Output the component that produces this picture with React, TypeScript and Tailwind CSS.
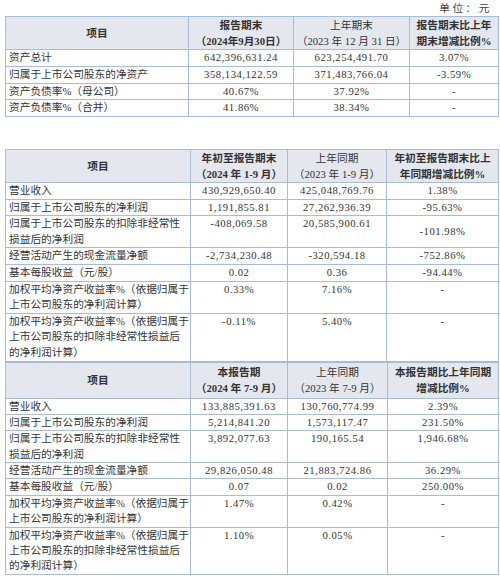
import React from "react";

type Row = { label: string[]; cells: string[]; midLast?: boolean };
type Sheet = {
  cols: string[];
  head: string[][];
  headBold: boolean[];
  headH: string;
  line: string;
  rows: Row[];
};

const SHEETS: Sheet[] = [
  {
    cols: ["w-[183px]", "w-[105px]", "w-[116px]", "w-[89px]"],
    head: [["项目"], ["报告期末", "（2024年9月30日）"], ["上年期末", "（2023 年 12 月 31 日）"], ["报告期末比上年", "期末增减比例%"]],
    headBold: [true, true, false, true],
    headH: "h-[33px]",
    line: "h-[15.75px] leading-[15.75px]",
    rows: [
      { label: ["资产总计"], cells: ["642,396,631.24", "623,254,491.70", "3.07%"] },
      { label: ["归属于上市公司股东的净资产"], cells: ["358,134,122.59", "371,483,766.04", "-3.59%"] },
      { label: ["资产负债率%（母公司）"], cells: ["40.67%", "37.92%", "-"] },
      { label: ["资产负债率%（合并）"], cells: ["41.86%", "38.34%", "-"] },
    ],
  },
  {
    cols: ["w-[185px]", "w-[97px]", "w-[99px]", "w-[112px]"],
    head: [["项目"], ["年初至报告期末", "（2024 年 1-9 月）"], ["上年同期", "（2023 年 1-9 月）"], ["年初至报告期末比上", "年同期增减比例%"]],
    headBold: [true, true, false, true],
    headH: "h-[33px]",
    line: "h-[15.6px] leading-[15.6px]",
    rows: [
      { label: ["营业收入"], cells: ["430,929,650.40", "425,048,769.76", "1.38%"] },
      { label: ["归属于上市公司股东的净利润"], cells: ["1,191,855.81", "27,262,936.39", "-95.63%"] },
      { label: ["归属于上市公司股东的扣除非经常性", "损益后的净利润"], cells: ["-408,069.58", "20,585,900.61", "-101.98%"], midLast: true },
      { label: ["经营活动产生的现金流量净额"], cells: ["-2,734,230.48", "-320,594.18", "-752.86%"] },
      { label: ["基本每股收益（元/股）"], cells: ["0.02", "0.36", "-94.44%"] },
      { label: ["加权平均净资产收益率%（依据归属于", "上市公司股东的净利润计算）"], cells: ["0.33%", "7.16%", "-"] },
      { label: ["加权平均净资产收益率%（依据归属于", "上市公司股东的扣除非经常性损益后", "的净利润计算）"], cells: ["-0.11%", "5.40%", "-"] },
    ],
  },
  {
    cols: ["w-[185px]", "w-[97px]", "w-[100px]", "w-[111px]"],
    head: [["项目"], ["本报告期", "（2024 年 7-9 月）"], ["上年同期", "（2023 年 7-9 月）"], ["本报告期比上年同期", "增减比例%"]],
    headBold: [true, true, false, true],
    headH: "h-[36px]",
    line: "h-[15.4px] leading-[15.4px]",
    rows: [
      { label: ["营业收入"], cells: ["133,885,391.63", "130,760,774.99", "2.39%"] },
      { label: ["归属于上市公司股东的净利润"], cells: ["5,214,841.20", "1,573,117.47", "231.50%"] },
      { label: ["归属于上市公司股东的扣除非经常性", "损益后的净利润"], cells: ["3,892,077.63", "190,165.54", "1,946.68%"] },
      { label: ["经营活动产生的现金流量净额"], cells: ["29,826,050.48", "21,883,724.86", "36.29%"] },
      { label: ["基本每股收益（元/股）"], cells: ["0.07", "0.02", "250.00%"] },
      { label: ["加权平均净资产收益率%（依据归属于", "上市公司股东的净利润计算）"], cells: ["1.47%", "0.42%", "-"] },
      { label: ["加权平均净资产收益率%（依据归属于", "上市公司股东的扣除非经常性损益后", "的净利润计算）"], cells: ["1.10%", "0.05%", "-"] },
    ],
  },
];

const cellBorder = "border border-[#a9bcd6]";

const DataTable = ({ sheet }: { sheet: Sheet }) => (
  <table className="table-fixed border-collapse w-[493px]">
    <colgroup>
      {sheet.cols.map((c, i) => (
        <col key={i} className={c} />
      ))}
    </colgroup>
    <thead>
      <tr className={`${sheet.headH} bg-[#e4e8ee]`}>
        {sheet.head.map((lines, i) => (
          <th
            key={i}
            className={`${cellBorder} p-0 text-center align-middle whitespace-nowrap ${sheet.headBold[i] ? "font-bold" : "font-normal"}`}
          >
            {lines.map((l, j) => (
              <div key={j} className="h-[16px] leading-[16px]">
                {l}
              </div>
            ))}
          </th>
        ))}
      </tr>
    </thead>
    <tbody>
      {sheet.rows.map((row, i) => (
        <tr key={i}>
          <td className={`${cellBorder} pl-[3px] py-0 align-top whitespace-nowrap`}>
            {row.label.map((l, j) => (
              <div key={j} className={sheet.line}>
                {l}
              </div>
            ))}
          </td>
          {row.cells.map((c, j) => (
            <td
              key={j}
              className={`${cellBorder} p-0 text-center whitespace-nowrap tracking-[0.5px] ${row.midLast && j === 2 ? "align-middle" : "align-top"}`}
            >
              <div className={sheet.line}>{c}</div>
            </td>
          ))}
        </tr>
      ))}
    </tbody>
  </table>
);

export default function App() {
  return (
    <div className="w-[500px] h-[577px] bg-white overflow-hidden text-[#333] text-[10.7px] font-['Liberation_Serif','Noto_Sans_CJK_SC',serif]">
      <div className="h-[16px] leading-[16px] flex justify-end pr-[8px] tracking-[2.5px] text-[#444]">单位：元</div>
      <div className="pl-[5px]">
        <DataTable sheet={SHEETS[0]} />
        <div className="h-[32px]" />
        <DataTable sheet={SHEETS[1]} />
        <DataTable sheet={SHEETS[2]} />
      </div>
    </div>
  );
}
